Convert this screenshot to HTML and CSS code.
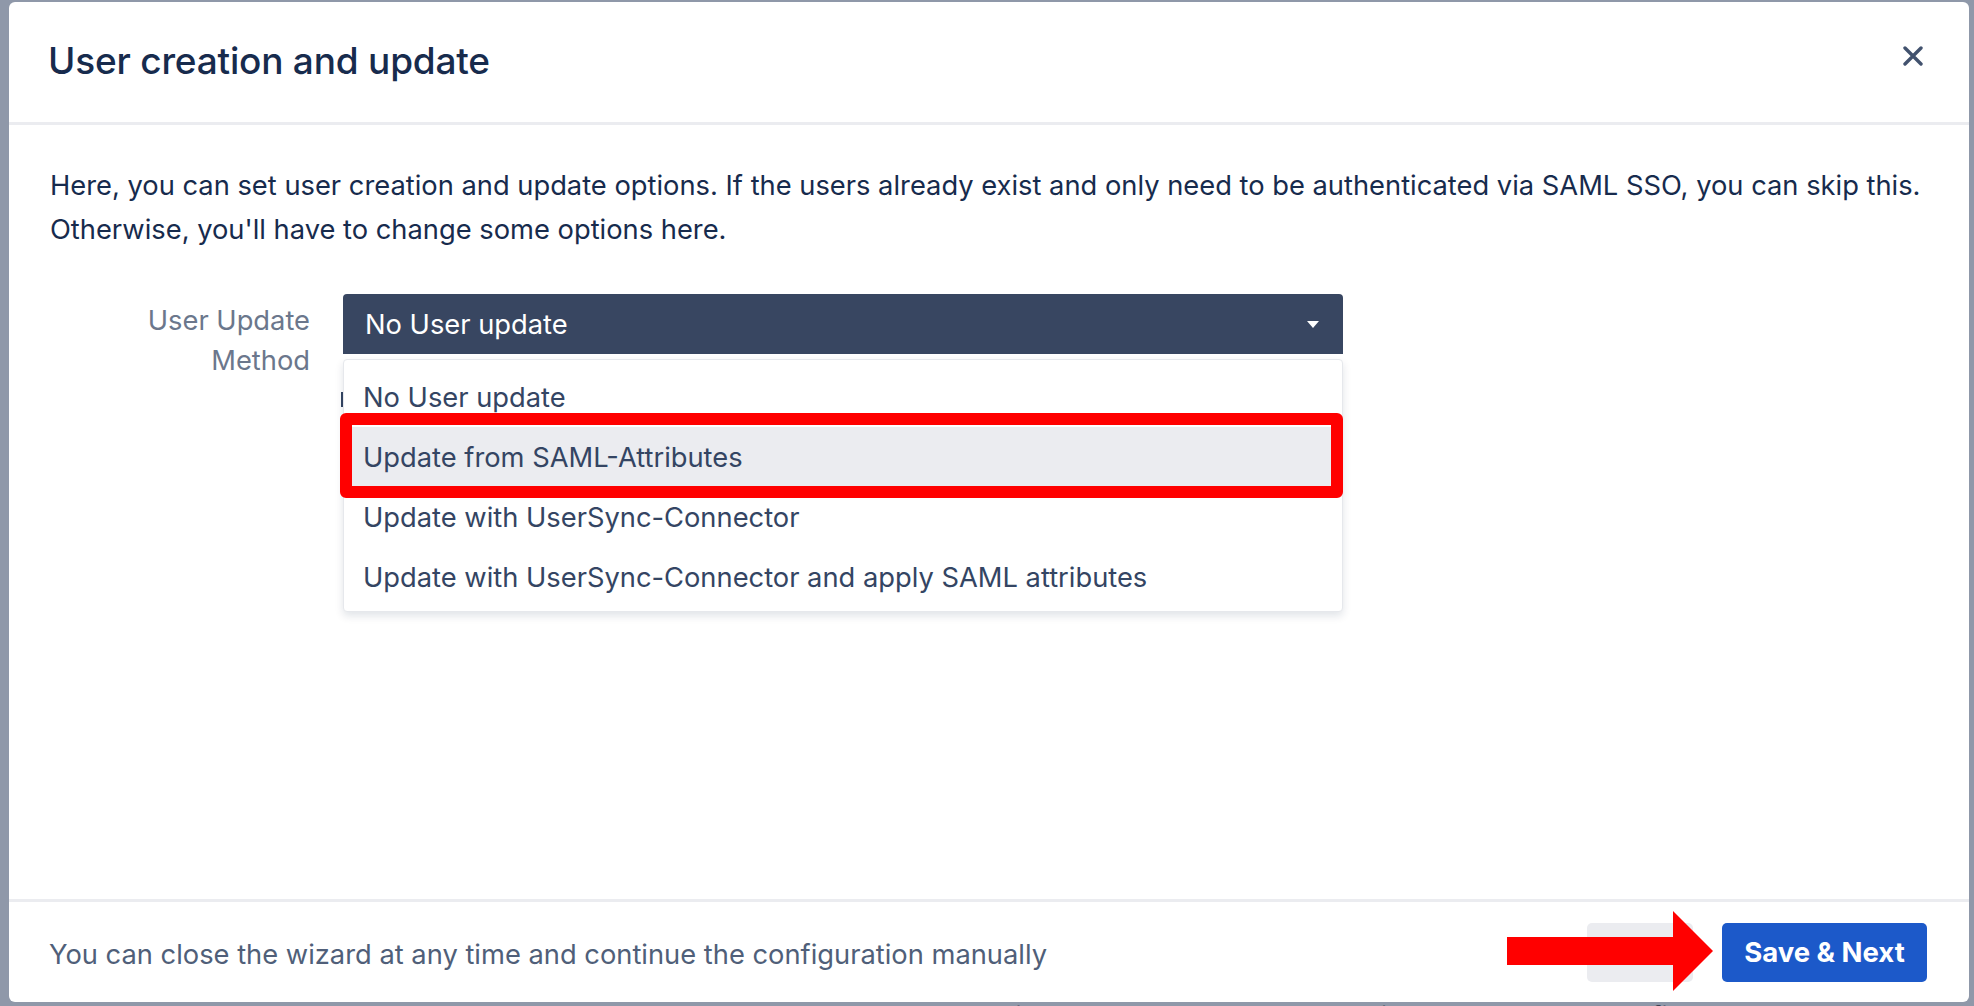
FILE: index.html
```html
<!DOCTYPE html>
<html lang="en">
<head>
<meta charset="utf-8">
<title>User creation and update</title>
<link rel="stylesheet" href="styles.css">
</head>
<body>
<div class="modal">
  <header class="modal-header">
    <h1 class="title">User creation and update</h1>
    <button class="close" aria-label="Close">
      <svg width="20" height="20" viewBox="0 0 20 20"><path d="M2 2L18 18M18 2L2 18" stroke="#42526E" stroke-width="3.4" stroke-linecap="round"/></svg>
    </button>
  </header>
  <main class="modal-body">
    <p class="intro">Here, you can set user creation and update options. If the users already exist and only need to be authenticated via SAML SSO, you can skip this.<br>Otherwise, you'll have to change some options here.</p>
    <div class="form-row">
      <label class="field-label">User Update<br>Method</label>
      <div class="select-wrap">
        <div class="select"><span>No User update</span><span class="caret"></span></div>
        <span class="peek"></span>
        <ul class="menu">
          <li class="option">No User update</li>
          <li class="option option-active">Update from SAML-Attributes</li>
          <li class="option">Update with UserSync-Connector</li>
          <li class="option">Update with UserSync-Connector and apply SAML attributes</li>
        </ul>
        <div class="highlight-box"></div>
      </div>
    </div>
  </main>
  <footer class="modal-footer">
    <span class="footer-note">You can close the wizard at any time and continue the configuration manually</span>
    <div class="actions">
      <button class="btn btn-subtle"></button>
      <button class="btn btn-primary">Save &amp; Next</button>
    </div>
    <svg class="arrow" width="206" height="80" viewBox="0 0 206 80"><polygon points="0,26 166,26 166,0 206,40 166,80 166,54 0,54" fill="#FF0000"/></svg>
  </footer>
</div>
<div class="page-peek">Click here to add the LDAP attribute and update the field below</div>
</body>
</html>
```
FILE: styles.css
```css
* { box-sizing: border-box; }
html, body { margin: 0; padding: 0; }
body {
  width: 1974px;
  height: 1006px;
  overflow: hidden;
  background: #8f98a9;
  font-family: Inter, "Noto Sans", "Liberation Sans", sans-serif;
  padding: 2px 5px 0 9px;
}
.modal {
  width: 1960px;
  height: 1000px;
  background: #ffffff;
  border-radius: 6px;
  display: flex;
  flex-direction: column;
  position: relative;
}
.modal-header {
  height: 123px;
  flex: none;
  display: flex;
  align-items: center;
  justify-content: space-between;
  padding: 0 46px 3px 39px;
  border-bottom: 3px solid #EBECF0;
}
.title {
  margin: 0;
  font-size: 37px;
  font-weight: 500;
  color: #172B4D;
  line-height: 48px;
  letter-spacing: -0.2px;
}
.close {
  border: 0;
  background: none;
  padding: 0;
  width: 20px;
  height: 20px;
  margin-bottom: 10px;
  display: flex;
}
.modal-body {
  flex: 1;
  padding: 39px 46px 0 41px;
}
.intro {
  margin: 0;
  font-size: 27.3px;
  line-height: 44px;
  color: #172B4D;
  white-space: nowrap;
}
.form-row {
  margin-top: 42px;
  display: flex;
  gap: 33px;
  align-items: flex-start;
}
.field-label {
  width: 260px;
  text-align: right;
  font-size: 27.3px;
  line-height: 40px;
  color: #6B778C;
  margin-top: 7px;
}
.select-wrap {
  position: relative;
  width: 1000px;
}
.select {
  height: 60px;
  background: #384661;
  border-radius: 4px 4px 0 0;
  color: #ffffff;
  font-size: 27.3px;
  display: flex;
  align-items: center;
  justify-content: space-between;
  padding: 0 24px 0 22px;
}
.caret {
  width: 0;
  height: 0;
  border-left: 6.5px solid transparent;
  border-right: 6.5px solid transparent;
  border-top: 7px solid #ffffff;
}
.peek {
  position: absolute;
  left: -2px;
  top: 98px;
  width: 2px;
  height: 15px;
  background: #344563;
}
.menu {
  position: absolute;
  top: 65px;
  left: 0;
  width: 1000px;
  margin: 0;
  list-style: none;
  padding: 7px 0 4px;
  background: #ffffff;
  border: 1px solid #E6E8EC;
  border-radius: 4px;
  box-shadow: 0 4px 8px rgba(9, 30, 66, 0.12);
}
.option {
  height: 60px;
  display: flex;
  align-items: center;
  padding-left: 19px;
  font-size: 27.3px;
  color: #344563;
}
.option-active {
  background: #EBECF0;
}
.highlight-box {
  position: absolute;
  left: -3px;
  top: 119px;
  width: 1003px;
  height: 85px;
  border: 12px solid #FF0000;
  border-radius: 6px;
}
.modal-footer {
  flex: none;
  height: 103px;
  border-top: 3px solid #EBECF0;
  display: flex;
  align-items: center;
  justify-content: space-between;
  padding: 0 42px 0 40px;
  position: relative;
}
.footer-note {
  font-size: 27.3px;
  color: #505F79;
  margin-top: 5px;
}
.actions {
  display: flex;
  gap: 29px;
}
.btn {
  height: 59px;
  border: 0;
  border-radius: 5px;
  font-family: inherit;
  font-size: 27.5px;
}
.btn-subtle {
  width: 106px;
  background: #EBECF0;
}
.btn-primary {
  width: 205px;
  background: #1C59C9;
  color: #ffffff;
  font-weight: 700;
}
.arrow {
  position: absolute;
  right: 256px;
  top: 9px;
}
.page-peek {
  margin: 0 0 0 980px;
  font-size: 27px;
  line-height: 30px;
  color: #3a4252;
  white-space: nowrap;
}
```
